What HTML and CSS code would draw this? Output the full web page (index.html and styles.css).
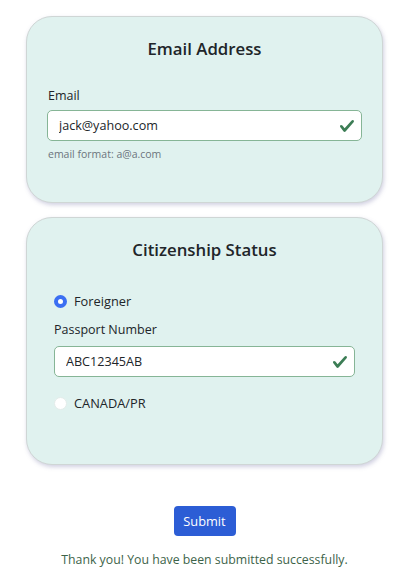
FILE: index.html
```html
<!DOCTYPE html>
<html lang="en">
<head>
<meta charset="utf-8">
<title>Form</title>
<link rel="stylesheet" href="styles.css">
</head>
<body>
<main class="page">
  <section class="card card-email">
    <h2 class="card-title">Email Address</h2>
    <label class="field-label" for="email">Email</label>
    <div class="input-wrap">
      <input class="text-input" id="email" type="text" value="jack@yahoo.com">
      <svg class="valid-icon" viewBox="0 0 8 8" aria-hidden="true"><path fill="#3c7d55" d="M2.3 6.73.6 4.53c-.4-1.04.46-1.4 1.1-.8l1.1 1.4 3.4-3.8c.6-.63 1.6-.27 1.2.7l-4 4.6c-.43.5-.8.4-1.1.1z"/></svg>
    </div>
    <div class="helper">email format: a@a.com</div>
  </section>

  <section class="card card-status">
    <h2 class="card-title">Citizenship Status</h2>
    <div class="status-body">
      <label class="radio-row">
        <input class="radio" type="radio" name="status" checked>
        <span>Foreigner</span>
      </label>
      <label class="field-label" for="passport">Passport Number</label>
      <div class="input-wrap">
        <input class="text-input" id="passport" type="text" value="ABC12345AB">
        <svg class="valid-icon" viewBox="0 0 8 8" aria-hidden="true"><path fill="#3c7d55" d="M2.3 6.73.6 4.53c-.4-1.04.46-1.4 1.1-.8l1.1 1.4 3.4-3.8c.6-.63 1.6-.27 1.2.7l-4 4.6c-.43.5-.8.4-1.1.1z"/></svg>
      </div>
      <label class="radio-row radio-row-last">
        <input class="radio" type="radio" name="status">
        <span>CANADA/PR</span>
      </label>
    </div>
  </section>

  <div class="actions">
    <button class="btn-submit" type="button">Submit</button>
    <p class="success">Thank you! You have been submitted successfully.</p>
  </div>
</main>
</body>
</html>
```

FILE: styles.css
```css
* { box-sizing: border-box; }

body {
  margin: 0;
  background: #ffffff;
  font-family: "Open Sans", "Noto Sans", sans-serif;
  color: #212529;
}

.page {
  width: 357px;
  margin: 16px 0 0 26px;
  display: flex;
  flex-direction: column;
  gap: 14px;
}

.card {
  background: #e0f2ef;
  border: 1px solid #cfd6d5;
  border-radius: 26px;
  box-shadow: 1px 2px 4px rgba(120, 120, 170, 0.35);
  padding: 20px 20px 0 20px;
}

.card-email { height: 187px; }
.card-status { height: 248px; }

.card-title {
  margin: 0;
  text-align: center;
  font-size: 16.8px;
  font-weight: 600;
  line-height: 24px;
  color: #212529;
}

.field-label {
  display: block;
  font-size: 12.5px;
  line-height: 18px;
  color: #212529;
}

.card-email .field-label { margin-top: 26px; margin-bottom: 5px; padding-left: 1px; }

.input-wrap {
  position: relative;
}

.text-input {
  display: block;
  width: 100%;
  height: 31px;
  border: 1px solid #86b596;
  border-radius: 5px;
  background: #ffffff;
  padding: 0 30px 0 11px;
  font-family: inherit;
  font-size: 12.6px;
  color: #212529;
  outline: none;
}

.valid-icon {
  position: absolute;
  right: 7px;
  top: 7.5px;
  width: 16px;
  height: 16px;
}

.helper {
  margin-top: 6px;
  padding-left: 1px;
  font-size: 10.5px;
  line-height: 14px;
  color: #6c757d;
}

.status-body {
  padding: 0 7px;
  margin-top: 30px;
}

.radio-row {
  display: flex;
  align-items: center;
  gap: 7px;
  font-size: 12.8px;
  line-height: 18px;
  color: #212529;
}

.radio {
  appearance: none;
  -webkit-appearance: none;
  margin: 0;
  width: 13px;
  height: 13px;
  border-radius: 50%;
  background: #ffffff;
  border: 1px solid #e4ecea;
}

.radio:checked {
  border: 4px solid #3b6ff2;
  background: #ffffff;
}

.card-status .field-label { margin-top: 11px; margin-bottom: 7px; }

.radio-row-last { margin-top: 17px; }

.actions {
  margin-top: 27px;
  display: flex;
  flex-direction: column;
  align-items: center;
}

.btn-submit {
  width: 62px;
  height: 30px;
  border: none;
  border-radius: 4px;
  background: #2c5dd5;
  color: #ffffff;
  font-family: inherit;
  font-size: 12.8px;
  padding: 0;
}

.success {
  margin: 15px 0 0 0;
  font-size: 12.3px;
  line-height: 18px;
  color: #3d6349;
}
```
